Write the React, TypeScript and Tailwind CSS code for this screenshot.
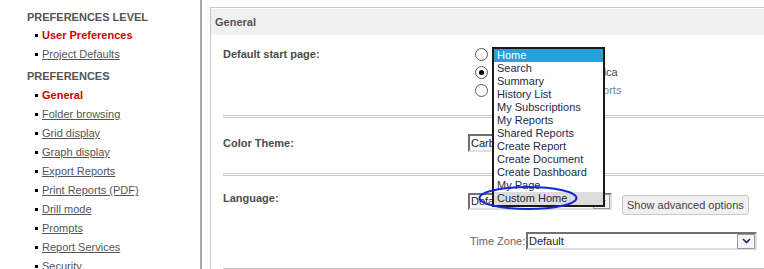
import React from "react";

const font = { fontFamily: '"Liberation Sans", Arial, sans-serif' };

function Bullet() {
  return <span className="ml-[8px] mr-[4px] inline-block h-[3px] w-[3px] bg-black" />;
}

function NavItem({ label, active }: { label: string; active?: boolean }) {
  return (
    <li className="flex h-[19px] items-center">
      <Bullet />
      {active ? (
        <span className="font-bold text-[#cc0000]">{label}</span>
      ) : (
        <span className="text-[#555] underline">{label}</span>
      )}
    </li>
  );
}

function Radio({ checked }: { checked?: boolean }) {
  return (
    <span className="flex h-[13px] w-[13px] shrink-0 items-center justify-center rounded-full border border-[#5a5a5a] bg-white">
      {checked && <span className="h-[5px] w-[5px] rounded-full bg-black" />}
    </span>
  );
}

function Chevron() {
  return (
    <svg width="9" height="6" viewBox="0 0 9 6">
      <path d="M1 1 L4.5 4.5 L8 1" fill="none" stroke="#1b2b5b" strokeWidth="1.6" />
    </svg>
  );
}

function Divider() {
  return <div className="border-t-[3px] border-double border-[#c8c8c8]" />;
}

const options = [
  "Home",
  "Search",
  "Summary",
  "History List",
  "My Subscriptions",
  "My Reports",
  "Shared Reports",
  "Create Report",
  "Create Document",
  "Create Dashboard",
  "My Page",
  "Custom Home",
];

export default function App() {
  return (
    <div className="relative flex h-[269px] w-[764px] overflow-hidden bg-white text-[11px]" style={font}>
      {/* Sidebar */}
      <div className="w-[202px] shrink-0 border-r-2 border-[#a9a9a9] pl-[27px] pt-[10px]">
        <div className="h-[14px] font-bold leading-[14px] text-[#555]">PREFERENCES LEVEL</div>
        <ul className="mt-[2px]">
          <NavItem label="User Preferences" active />
          <NavItem label="Project Defaults" />
        </ul>
        <div className="mt-[5px] h-[14px] font-bold leading-[14px] text-[#555]">PREFERENCES</div>
        <ul className="mt-[3px]">
          <NavItem label="General" active />
          <NavItem label="Folder browsing" />
          <NavItem label="Grid display" />
          <NavItem label="Graph display" />
          <NavItem label="Export Reports" />
          <NavItem label="Print Reports (PDF)" />
          <NavItem label="Drill mode" />
          <NavItem label="Prompts" />
          <NavItem label="Report Services" />
          <NavItem label="Security" />
        </ul>
      </div>

      {/* Main */}
      <div className="min-w-0 flex-1 overflow-hidden pl-[8px] pt-[7px]">
        <div className="w-[700px] border-l border-t border-[#c8c8c8] pt-[1px]">
          <div className="flex h-[26px] items-center bg-[#f0f0f0] pl-[4px] font-bold text-[#555]">General</div>
          <div className="pl-[12px]">
            {/* Row 1 */}
            <div className="flex h-[80px] pt-[10px]">
              <div className="w-[245px] font-bold leading-[18px] text-[#4d4d4d]">Default start page:</div>
              <div className="flex flex-col">
                <div className="flex h-[18px] items-center pl-[7px]">
                  <Radio />
                  <span className="ml-[5px] text-[#444]">Home</span>
                </div>
                <div className="flex h-[18px] items-center pl-[7px]">
                  <Radio checked />
                  <span className="ml-[5px] whitespace-nowrap text-[#444]">Project: Tutorials America</span>
                </div>
                <div className="flex h-[18px] items-center pl-[7px]">
                  <Radio />
                  <span className="ml-[5px] whitespace-nowrap text-[#6b86ab]">Shared folder: My Reports</span>
                </div>
              </div>
            </div>
            <Divider />
            {/* Row 2 */}
            <div className="flex h-[55px] pt-[16px]">
              <div className="w-[245px] font-bold leading-[18px] text-[#4d4d4d]">Color Theme:</div>
              <div className="flex h-[18px] w-[130px] items-center border-2 border-b-[#e0e0e0] border-l-[#707070] border-r-[#e0e0e0] border-t-[#707070] pl-[1px] text-[#222]">
                Carbon
              </div>
            </div>
            <Divider />
            {/* Row 3 */}
            <div className="flex h-[92px] pt-[13px]">
              <div className="w-[245px] font-bold leading-[18px] text-[#4d4d4d]">Language:</div>
              <div className="flex flex-col pt-[4px]">
                <div className="flex items-start">
                  <div className="flex h-[17px] w-[144px] items-center justify-between border-2 border-b-[#e0e0e0] border-l-[#707070] border-r-[#e0e0e0] border-t-[#707070] pl-[1px] text-[#222]">
                    <span>Default</span>
                    <span className="flex h-[15px] w-[17px] items-center justify-center border border-[#999] bg-[#f4f4f4]">
                      <Chevron />
                    </span>
                  </div>
                  <div className="ml-[10px] mt-[2px] flex h-[20px] items-center rounded-[3px] border border-[#c8c8c8] bg-[#f0f0f0] px-[4px] text-[#444]">
                    Show advanced options
                  </div>
                </div>
                <div className="mt-[17px] flex items-center">
                  <span className="ml-[2px] w-[56px] text-[#666]">Time Zone:</span>
                  <div className="flex h-[18px] w-[231px] items-center justify-between border-2 border-b-[#e0e0e0] border-l-[#707070] border-r-[#e0e0e0] border-t-[#707070] pl-[1px] text-[#222]">
                    <span>Default</span>
                    <span className="flex h-[15px] w-[18px] items-center justify-center border border-[#999] bg-[#f4f4f4]">
                      <Chevron />
                    </span>
                  </div>
                </div>
              </div>
            </div>
            <Divider />
          </div>
        </div>
      </div>

      {/* Open dropdown list */}
      <div className="absolute left-[492px] top-[47px] w-[113px] border-2 border-[#1a1a1a] bg-white">
        {options.map((o, i) => (
          <div
            key={o}
            className={
              "h-[13px] whitespace-nowrap pl-[3px] leading-[13px] " +
              (i === 0 ? "bg-[#27a0dc] text-white" : i === options.length - 1 ? "bg-[#dcdcdc] text-[#1e2a4a]" : "text-[#1e2a4a]")
            }
          >
            {o}
          </div>
        ))}
      </div>

      {/* Annotation ellipse */}
      <svg className="pointer-events-none absolute left-[476px] top-[184px]" width="106" height="28" viewBox="0 0 106 28">
        <ellipse cx="52" cy="14" rx="48.5" ry="11" fill="none" stroke="#1428d8" strokeWidth="2" />
      </svg>
    </div>
  );
}
